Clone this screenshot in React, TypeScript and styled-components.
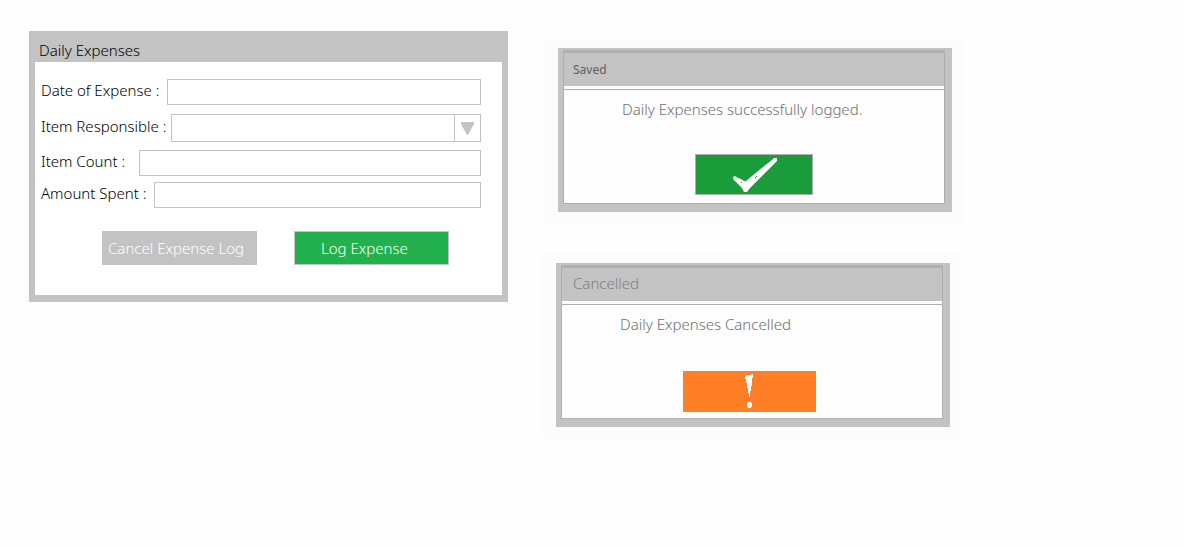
import React from 'react';
import styled, { createGlobalStyle } from 'styled-components';

const Global = createGlobalStyle`
  * { box-sizing: border-box; }
  body {
    margin: 0;
    background: #fefefe;
    color: #000;
    font: 300 15px/20px "Noto Sans", "Open Sans", sans-serif;
  }
  input, select, button { font: inherit; margin: 0; border-radius: 0; }
`;

const Page = styled.main`
  display: flex;
  flex-wrap: wrap;
  align-items: flex-start;
  gap: 34px;
  padding: 31px 29px;
`;

const FormWindow = styled.form`
  flex: 0 1 479px;
  background: #fff;
  border: 6px solid #c3c3c3;
  border-top-width: 0;
  border-bottom-width: 7px;
`;

const FormTitle = styled.h1`
  margin: 0;
  padding: 9px 4px 2px;
  background: #c3c3c3;
  font-size: 15px;
  font-weight: 300;
  line-height: 20px;
`;

const Fields = styled.div<{ $gap: number }>`
  display: flex;
  flex-direction: column;
  gap: ${(p) => p.$gap}px;
`;

const FormBody = styled.div`
  padding: 17px 21px 0 6px;
`;

const Field = styled.div<{ $gap: number }>`
  display: flex;
  align-items: center;
  gap: ${(p) => p.$gap}px;
`;

const Label = styled.label`
  flex: none;
  padding-bottom: 4px;
`;

const TextInput = styled.input`
  flex: 1;
  min-width: 0;
  height: 26px;
  padding: 0 6px;
  background: #fff;
  border: 1px solid #c3c3c3;
`;

const SelectBox = styled.div`
  flex: 1;
  display: grid;
  grid-template-columns: 1fr 26px;
  height: 28px;
  border: 1px solid #c3c3c3;
`;

const Select = styled.select`
  grid-area: 1 / 1 / 2 / 3;
  min-width: 0;
  padding: 0 32px 0 6px;
  appearance: none;
  background: transparent;
  border: 0;
`;

const Arrow = styled.span`
  grid-area: 1 / 2;
  display: grid;
  place-items: center;
  border-left: 1px solid #c3c3c3;
  pointer-events: none;
`;

const Actions = styled.div`
  display: flex;
  justify-content: center;
  gap: 37px;
  padding: 23px 0 30px 14px;
`;

const Action = styled.button<{ $primary?: boolean }>`
  flex: 0 1 155px;
  height: 34px;
  padding: 0 ${(p) => (p.$primary ? 26 : 5)}px;
  text-align: left;
  white-space: nowrap;
  color: #fff;
  background: ${(p) => (p.$primary ? '#22b14c' : '#c3c3c3')};
  border: 1px solid #c3c3c3;
`;

const Dialogs = styled.div`
  flex: 0 1 423px;
  display: flex;
  flex-direction: column;
  gap: 30px;
  padding-top: 7px;
`;

const Backdrop = styled.div<{ $shift?: boolean }>`
  padding: 10px ${(p) => (p.$shift ? 11 : 13)}px 11px 16px;
  margin: 0 ${(p) => (p.$shift ? 4 : 0)}px 0 ${(p) => (p.$shift ? -2 : 0)}px;
  background: #fcfcfc;
`;

const Dialog = styled.section`
  padding: 2px 7px 8px 5px;
  background: #c3c3c3;
`;

const Frame = styled.div`
  border: 1px solid #afafaf;
  border-top-width: 3px;
`;

const DialogTitle = styled.h2<{ $small?: boolean }>`
  margin: 0;
  height: 33px;
  padding: ${(p) => (p.$small ? '7px 9px' : '5px 11px')};
  color: ${(p) => (p.$small ? '#5f5f5f' : '#7f7f7f')};
  font-size: ${(p) => (p.$small ? 12 : 15)}px;
  font-weight: ${(p) => (p.$small ? 400 : 300)};
  line-height: 20px;
`;

const DialogBody = styled.div`
  display: flex;
  flex-direction: column;
  height: 117px;
  padding: 13px 9px 0;
  background:
    linear-gradient(#afafaf, #afafaf) 0 3px / 100% 1px no-repeat,
    #fdfdfd;
`;

const Message = styled.p`
  margin: 0 0 0 49px;
  color: #707070;
`;

const Confirm = styled.button<{ $warning?: boolean }>`
  display: grid;
  place-items: center;
  width: ${(p) => (p.$warning ? 133 : 118)}px;
  height: 41px;
  margin: ${(p) => (p.$warning ? 'auto auto 6px 112px' : 'auto auto 8px 122px')};
  padding: 0;
  background: ${(p) => (p.$warning ? '#ff7f27' : '#1a9c3b')};
  border: 1px solid ${(p) => (p.$warning ? '#ff7f27' : '#afafaf')};
`;

export default function App() {
  return (
    <>
      <Global />
      <Page>
        <FormWindow onSubmit={(e) => e.preventDefault()}>
          <FormTitle>Daily Expenses</FormTitle>
          <FormBody>
            <Fields $gap={9}>
              <Field $gap={8}>
                <Label htmlFor="date">Date of Expense :</Label>
                <TextInput id="date" />
              </Field>
              <Fields $gap={8}>
                <Field $gap={5}>
                  <Label htmlFor="item">Item Responsible :</Label>
                  <SelectBox>
                    <Select id="item" defaultValue="">
                      <option value="" />
                    </Select>
                    <Arrow>
                      <svg width="13" height="13" viewBox="0 0 13 13" aria-hidden="true">
                        <path d="M0 0h13v2L7 13H6L0 2z" fill="#c3c3c3" />
                      </svg>
                    </Arrow>
                  </SelectBox>
                </Field>
                <Fields $gap={6}>
                  <Field $gap={14}>
                    <Label htmlFor="count">Item Count :</Label>
                    <TextInput id="count" />
                  </Field>
                  <Field $gap={8}>
                    <Label htmlFor="amount">Amount Spent :</Label>
                    <TextInput id="amount" />
                  </Field>
                </Fields>
              </Fields>
            </Fields>
          </FormBody>
          <Actions>
            <Action type="button">Cancel Expense Log</Action>
            <Action type="submit" $primary>Log Expense</Action>
          </Actions>
        </FormWindow>
        <Dialogs>
          <Backdrop>
            <Dialog>
              <Frame>
                <DialogTitle $small>Saved</DialogTitle>
                <DialogBody>
                  <Message>Daily Expenses successfully logged.</Message>
                  <Confirm type="button" aria-label="OK">
                    <svg width="46" height="36" viewBox="0 0 46 36" aria-hidden="true">
                      <path d="M2 20l2-1 3 2 3 1 3 2h2l6-5 6-5L41 3l2-2h3v3l-4 4-6 6-6 6-6 6-5 5-3 4h-3l-2-4-4-4-5-5z" fill="#fff" />
                      <path d="M10 25h1v1h-1zM24 20h1v-1h1v1h-1v1h-1z" fill="#1a9c3b" />
                    </svg>
                  </Confirm>
                </DialogBody>
              </Frame>
            </Dialog>
          </Backdrop>
          <Backdrop $shift>
            <Dialog>
              <Frame>
                <DialogTitle>Cancelled</DialogTitle>
                <DialogBody>
                  <Message>Daily Expenses Cancelled</Message>
                  <Confirm type="button" $warning aria-label="Dismiss">
                    <svg width="9" height="35" viewBox="0 0 9 35" fill="#fff" aria-hidden="true">
                      <path d="M0 2l2-1h4V0h2v4H7v8H6v5H5v6H4v-4H3v-5H2V9H1V5H0z" />
                      <path d="M3 28h3l1 2v2l-1 2H3l-1-2v-2z" />
                    </svg>
                  </Confirm>
                </DialogBody>
              </Frame>
            </Dialog>
          </Backdrop>
        </Dialogs>
      </Page>
    </>
  );
}
